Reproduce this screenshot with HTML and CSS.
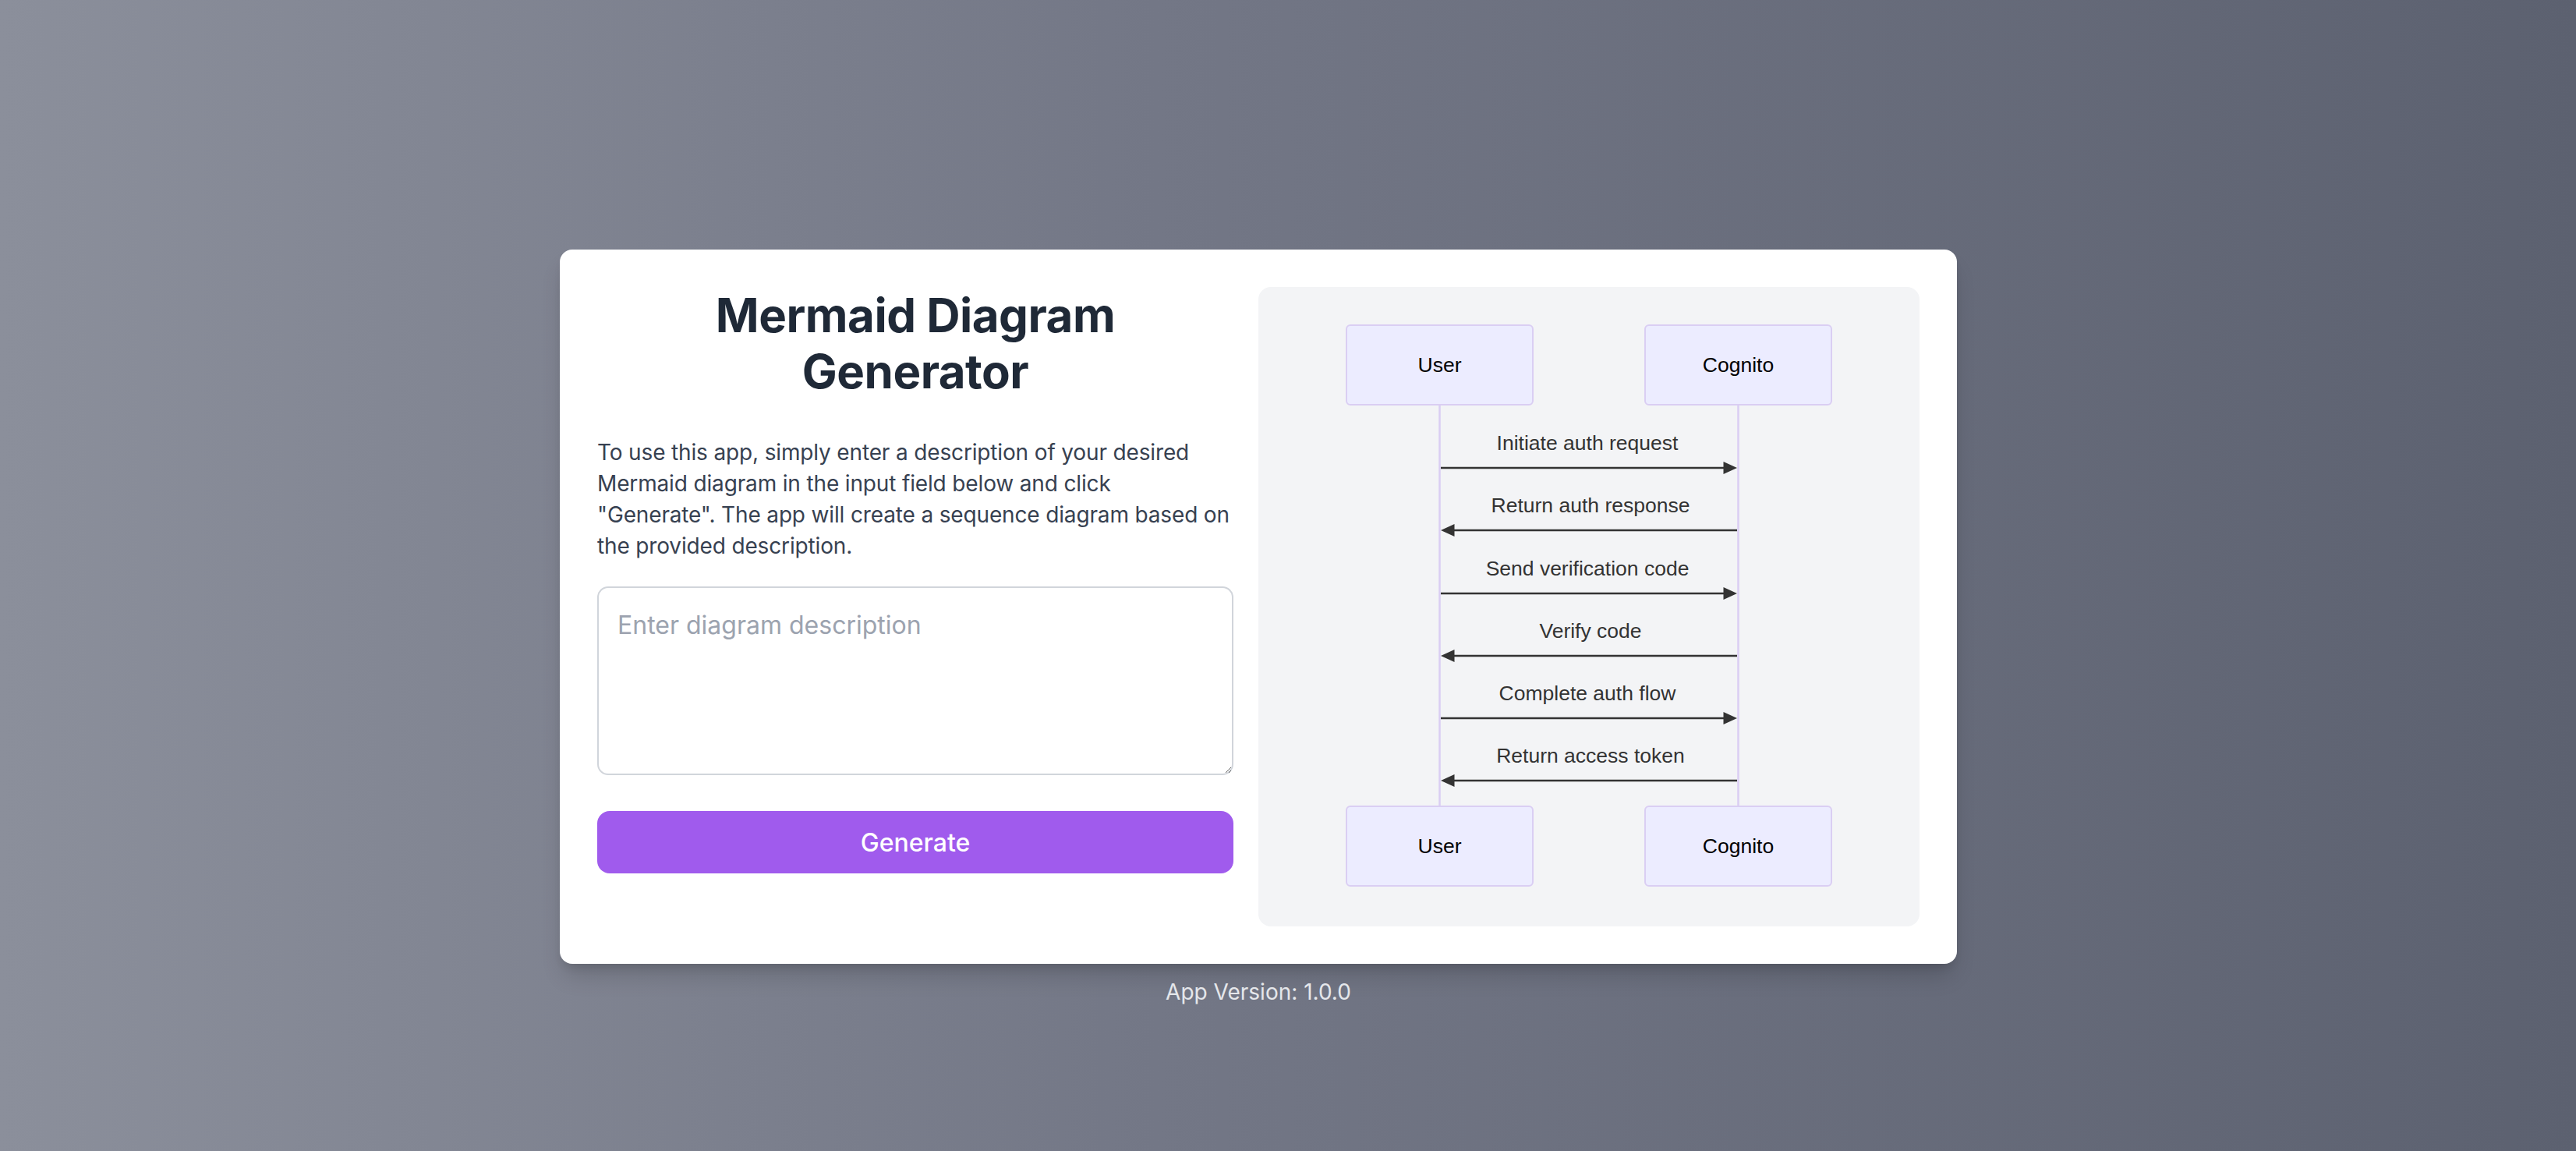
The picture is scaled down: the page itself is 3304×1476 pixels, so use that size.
FILE: index.html
```html
<!DOCTYPE html>
<html lang="en">
<head>
<meta charset="utf-8">
<title>Mermaid Diagram Generator</title>
<link rel="stylesheet" href="styles.css">
</head>
<body>
<main class="page">
  <section class="card">
    <div class="left">
      <h1 class="title">Mermaid Diagram Generator</h1>
      <p class="intro">To use this app, simply enter a description of your desired Mermaid diagram in the input field below and click "Generate". The app will create a sequence diagram based on the provided description.</p>
      <textarea class="desc" placeholder="Enter diagram description"></textarea>
      <button class="generate" type="button">Generate</button>
    </div>
    <div class="right">
      <svg class="diagram" width="644" height="724" viewBox="0 0 644 724" xmlns="http://www.w3.org/2000/svg">
        <g class="lifelines">
          <line x1="130.5" y1="104" x2="130.5" y2="617"/>
          <line x1="513.5" y1="104" x2="513.5" y2="617"/>
        </g>
        <g class="actors">
          <rect x="11" y="1" width="239" height="102" rx="5"/>
          <rect x="394" y="1" width="239" height="102" rx="5"/>
          <rect x="11" y="618" width="239" height="102" rx="5"/>
          <rect x="394" y="618" width="239" height="102" rx="5"/>
        </g>
        <g class="actor-text">
          <text x="130.5" y="61">User</text>
          <text x="513.5" y="61">Cognito</text>
          <text x="130.5" y="678">User</text>
          <text x="513.5" y="678">Cognito</text>
        </g>
        <g class="msg-text">
          <text x="320" y="161">Initiate auth request</text>
          <text x="324" y="241">Return auth response</text>
          <text x="320" y="322">Send verification code</text>
          <text x="324" y="402">Verify code</text>
          <text x="320" y="482">Complete auth flow</text>
          <text x="324" y="562">Return access token</text>
        </g>
        <g class="msg-lines">
          <line x1="132" y1="184" x2="498" y2="184"/>
          <line x1="146" y1="264" x2="512" y2="264"/>
          <line x1="132" y1="345" x2="498" y2="345"/>
          <line x1="146" y1="425" x2="512" y2="425"/>
          <line x1="132" y1="505" x2="498" y2="505"/>
          <line x1="146" y1="585" x2="512" y2="585"/>
        </g>
        <g class="heads">
          <polygon points="512,184 494.5,176 494.5,192"/>
          <polygon points="132,264 149.5,256 149.5,272"/>
          <polygon points="512,345 494.5,337 494.5,353"/>
          <polygon points="132,425 149.5,417 149.5,433"/>
          <polygon points="512,505 494.5,497 494.5,513"/>
          <polygon points="132,585 149.5,577 149.5,593"/>
        </g>
      </svg>
    </div>
  </section>
  <p class="version">App Version: 1.0.0</p>
</main>
</body>
</html>
```

FILE: styles.css
```css
* {
  box-sizing: border-box;
}

html, body {
  margin: 0;
  padding: 0;
}

body {
  min-height: 100vh;
  background: linear-gradient(to right, #8b8f9b 0%, #737786 45%, #5c6170 100%);
  font-family: Inter, "Noto Sans", "Liberation Sans", sans-serif;
}

.page {
  width: 1792px;
  margin-left: 718px;
  padding-top: 320px;
}

.card {
  display: flex;
  gap: 32px;
  padding: 48px;
  background: #ffffff;
  border-radius: 16px;
  box-shadow: 0 20px 30px -6px rgba(0, 0, 0, 0.16), 0 8px 12px -4px rgba(0, 0, 0, 0.1);
}

.left {
  width: 816px;
  flex: none;
}

.title {
  margin: 0 0 48px;
  font-size: 60px;
  line-height: 72px;
  font-weight: 700;
  letter-spacing: -0.5px;
  color: #1f2937;
  text-align: center;
}

.intro {
  margin: 0 0 32px;
  font-size: 28px;
  line-height: 40px;
  letter-spacing: -0.15px;
  color: #374151;
}

.desc {
  display: block;
  width: 100%;
  height: 242px;
  margin: 0 0 46px;
  padding: 24px;
  border: 2px solid #d1d5db;
  border-radius: 14px;
  font-family: inherit;
  font-size: 32px;
  line-height: 48px;
  color: #111827;
  background: #ffffff;
  outline: none;
}

.desc::placeholder {
  color: #9ca3af;
}

.generate {
  display: block;
  width: 100%;
  height: 80px;
  border: none;
  border-radius: 16px;
  background: #a05bed;
  color: #ffffff;
  font-family: inherit;
  font-size: 32px;
  font-weight: 500;
  cursor: pointer;
}

.right {
  flex: 1;
  height: 820px;
  padding: 48px 0;
  background: #f3f4f6;
  border-radius: 16px;
  display: flex;
  justify-content: center;
  align-items: flex-start;
}

.diagram {
  display: block;
}

.lifelines line {
  stroke: #dacef3;
  stroke-width: 2.5;
}

.actors rect {
  fill: #ececff;
  stroke: #dacef3;
  stroke-width: 2;
}

.actor-text text {
  font-family: "Liberation Sans", Arial, sans-serif;
  font-size: 26.5px;
  fill: #000000;
  text-anchor: middle;
}

.msg-text text {
  font-family: "Liberation Sans", Arial, sans-serif;
  font-size: 26.5px;
  fill: #333333;
  text-anchor: middle;
}

.msg-lines line {
  stroke: #333333;
  stroke-width: 2.5;
}

.heads polygon {
  fill: #333333;
}

.version {
  margin: 16px 0 0;
  text-align: center;
  font-size: 28px;
  line-height: 40px;
  color: #e5e7eb;
}
```
